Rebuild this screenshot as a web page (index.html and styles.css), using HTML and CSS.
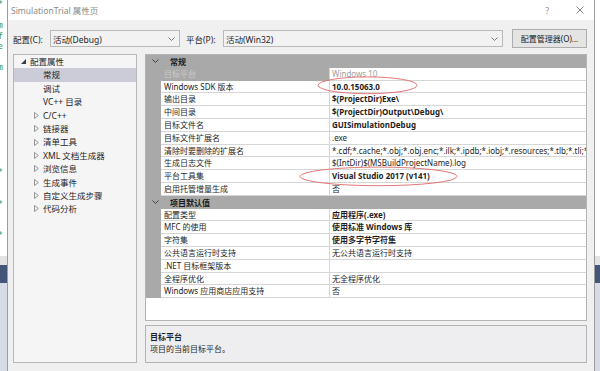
FILE: index.html
```html
<!DOCTYPE html>
<html>
<head>
<meta charset="utf-8" />
<meta name="viewport" content="width=device-width,initial-scale=1.0"/>
<link rel="stylesheet" href="styles.css">
</head>
<body>

<div class="side side-left">
<pre class="code">*

m
f
e

m









*


*


*</pre>
</div>

<div class="dialog">
  <div class="titlebar">
    <span class="title">SimulationTrial 属性页</span>
    <span class="help">?</span>
    <svg class="close" width="8" height="8" viewBox="0 0 8 8"><path d="M0.5 0.5L7.5 7.5M7.5 0.5L0.5 7.5" stroke="#7a7a7a" stroke-width="0.9" fill="none"/></svg>
  </div>

  <div class="toolbar">
    <span class="lbl lbl1">配置(C):</span>
    <div class="combo combo1"><span>活动(Debug)</span><svg width="7" height="4" viewBox="0 0 7 4"><path d="M0.5 0.5L3.5 3.5L6.5 0.5" stroke="#666" stroke-width="0.9" fill="none"/></svg></div>
    <span class="lbl lbl2">平台(P):</span>
    <div class="combo combo2"><span>活动(Win32)</span><svg width="7" height="4" viewBox="0 0 7 4"><path d="M0.5 0.5L3.5 3.5L6.5 0.5" stroke="#666" stroke-width="0.9" fill="none"/></svg></div>
    <div class="btn">配置管理器(O)...</div>
  </div>

  <div class="main">
    <div class="tree">
      <div class="node root"><svg width="5" height="5" viewBox="0 0 5 5"><polygon points="5,0 5,5 0,5" fill="#3a3a3a"/></svg><span>配置属性</span></div>
      <div class="node leaf sel">常规</div>
      <div class="node leaf">调试</div>
      <div class="node leaf">VC++ 目录</div>
      <div class="node sub"><svg width="5" height="7" viewBox="0 0 5 7"><polygon points="0.5,0.5 4.3,3.5 0.5,6.5" fill="none" stroke="#8a8a8a" stroke-width="0.9"/></svg><span>C/C++</span></div>
      <div class="node sub"><svg width="5" height="7" viewBox="0 0 5 7"><polygon points="0.5,0.5 4.3,3.5 0.5,6.5" fill="none" stroke="#8a8a8a" stroke-width="0.9"/></svg><span>链接器</span></div>
      <div class="node sub"><svg width="5" height="7" viewBox="0 0 5 7"><polygon points="0.5,0.5 4.3,3.5 0.5,6.5" fill="none" stroke="#8a8a8a" stroke-width="0.9"/></svg><span>清单工具</span></div>
      <div class="node sub"><svg width="5" height="7" viewBox="0 0 5 7"><polygon points="0.5,0.5 4.3,3.5 0.5,6.5" fill="none" stroke="#8a8a8a" stroke-width="0.9"/></svg><span>XML 文档生成器</span></div>
      <div class="node sub"><svg width="5" height="7" viewBox="0 0 5 7"><polygon points="0.5,0.5 4.3,3.5 0.5,6.5" fill="none" stroke="#8a8a8a" stroke-width="0.9"/></svg><span>浏览信息</span></div>
      <div class="node sub"><svg width="5" height="7" viewBox="0 0 5 7"><polygon points="0.5,0.5 4.3,3.5 0.5,6.5" fill="none" stroke="#8a8a8a" stroke-width="0.9"/></svg><span>生成事件</span></div>
      <div class="node sub"><svg width="5" height="7" viewBox="0 0 5 7"><polygon points="0.5,0.5 4.3,3.5 0.5,6.5" fill="none" stroke="#8a8a8a" stroke-width="0.9"/></svg><span>自定义生成步骤</span></div>
      <div class="node sub"><svg width="5" height="7" viewBox="0 0 5 7"><polygon points="0.5,0.5 4.3,3.5 0.5,6.5" fill="none" stroke="#8a8a8a" stroke-width="0.9"/></svg><span>代码分析</span></div>
    </div>

    <div class="right">
      <div class="grid">
        <div class="cat"><svg width="7" height="4" viewBox="0 0 7 4"><path d="M0.5 0.5L3.5 3.5L6.5 0.5" stroke="#333" stroke-width="0.9" fill="none"/></svg><span>常规</span></div>
        <div class="row picked"><div class="gut"></div><div class="name">目标平台</div><div class="val dim">Windows 10</div></div>
        <div class="row"><div class="gut"></div><div class="name">Windows SDK 版本</div><div class="val b">10.0.15063.0</div></div>
        <div class="row"><div class="gut"></div><div class="name">输出目录</div><div class="val b">$(ProjectDir)Exe\</div></div>
        <div class="row"><div class="gut"></div><div class="name">中间目录</div><div class="val b">$(ProjectDir)Output\Debug\</div></div>
        <div class="row"><div class="gut"></div><div class="name">目标文件名</div><div class="val b">GUISimulationDebug</div></div>
        <div class="row"><div class="gut"></div><div class="name">目标文件扩展名</div><div class="val">.exe</div></div>
        <div class="row"><div class="gut"></div><div class="name">清除时要删除的扩展名</div><div class="val">*.cdf;*.cache;*.obj;*.obj.enc;*.ilk;*.ipdb;*.iobj;*.resources;*.tlb;*.tli;*.t</div></div>
        <div class="row"><div class="gut"></div><div class="name">生成日志文件</div><div class="val">$(IntDir)$(MSBuildProjectName).log</div></div>
        <div class="row"><div class="gut"></div><div class="name">平台工具集</div><div class="val b">Visual Studio 2017 (v141)</div></div>
        <div class="row"><div class="gut"></div><div class="name">启用托管增量生成</div><div class="val">否</div></div>
        <div class="cat"><svg width="7" height="4" viewBox="0 0 7 4"><path d="M0.5 0.5L3.5 3.5L6.5 0.5" stroke="#333" stroke-width="0.9" fill="none"/></svg><span>项目默认值</span></div>
        <div class="row"><div class="gut"></div><div class="name">配置类型</div><div class="val b">应用程序(.exe)</div></div>
        <div class="row"><div class="gut"></div><div class="name">MFC 的使用</div><div class="val b">使用标准 Windows 库</div></div>
        <div class="row"><div class="gut"></div><div class="name">字符集</div><div class="val b">使用多字节字符集</div></div>
        <div class="row"><div class="gut"></div><div class="name">公共语言运行时支持</div><div class="val">无公共语言运行时支持</div></div>
        <div class="row"><div class="gut"></div><div class="name">.NET 目标框架版本</div><div class="val"></div></div>
        <div class="row"><div class="gut"></div><div class="name">全程序优化</div><div class="val">无全程序优化</div></div>
        <div class="row"><div class="gut"></div><div class="name">Windows 应用商店应用支持</div><div class="val">否</div></div>
      </div>
      <div class="desc">
        <div class="desc-title">目标平台</div>
        <div>项目的当前目标平台。</div>
      </div>
    </div>
  </div>
</div>

<div class="side side-right"></div>

<!-- red marks drawn over the screenshot -->
<svg class="marks" width="600" height="371" viewBox="0 0 600 371">
  <ellipse cx="367.5" cy="85.3" rx="49.5" ry="8.4" fill="none" stroke="#e06a6a" stroke-width="0.9"/>
  <ellipse cx="378.5" cy="176.4" rx="78.5" ry="9.3" fill="none" stroke="#e06a6a" stroke-width="0.9"/>
</svg>
</body>
</html>
```

FILE: styles.css
```css
body {
     margin:0;
     height:371px;
     overflow:hidden;
     display:flex;
     position:relative;
     font-family:"Noto Sans","Noto Sans CJK SC",sans-serif;
     color:#1e1e1e;
     background:#ffffff;
}

.side {
     background:linear-gradient(to bottom, #ffffff 0 256px, #e3e3e3 256px 265px, #44557a 265px 283px, #d6dbe6 283px);
}
.side-left {
     width:7px;
     overflow:hidden;
}
.side-right {
     flex:1;
}
.code {
     margin:0 0 0 -2px;
     font:8px/10.5px "DejaVu Sans Mono",monospace;
     color:#2b9a3a;
}

.dialog {
     width:586px;
     border-left:1px solid #9c9c9c;
     border-right:1px solid #9c9c9c;
     background:#f0f0f0;
     display:flex;
     flex-direction:column;
}

.titlebar {
     height:20px;
     background:#ffffff;
     display:flex;
     align-items:center;
     padding:0 10px 0 3px;
     font-size:8.5px;
     color:#8a8a8a;
}
.title {
     flex:1;
}
.help {
     margin-right:27px;
     font-size:8px;
}

.toolbar {
     height:19px;
     margin:9px 7px 0 5px;
     display:flex;
     align-items:center;
     font-size:8.5px;
}
.lbl1 {
     width:37px;
}
.lbl2 {
     width:37px;
     margin-left:6px;
}
.combo {
     box-sizing:border-box;
     height:17px;
     border:1px solid #b9b9b9;
     background:#f2f2f2;
     display:flex;
     align-items:center;
     justify-content:space-between;
     padding:0 4px 0 2px;
}
.combo1 {
     width:130px;
}
.combo2 {
     width:280px;
}
.btn {
     box-sizing:border-box;
     width:75px;
     height:19px;
     margin-left:9px;
     border:1px solid #adadad;
     background:#e4e4e4;
     display:flex;
     align-items:center;
     justify-content:center;
     font-size:8px;
}

.main {
     margin:6px 7px 0 5px;
     height:309px;
     display:flex;
     gap:8px;
}

.tree {
     box-sizing:border-box;
     width:124px;
     border:1px solid #b7b7b7;
     background:#f5f5f6;
     font-size:8.5px;
}
.node {
     height:13.4px;
     line-height:13.4px;
     display:flex;
     align-items:center;
     white-space:nowrap;
}
.root svg {
     margin:0 4px 0 7px;
}
.leaf {
     padding-left:29px;
}
.sub svg {
     margin:0 4px 0 20px;
}
.sel {
     background:#cbccd8;
}

.right {
     flex:1;
     display:flex;
     flex-direction:column;
     gap:4px;
}

.grid {
     box-sizing:border-box;
     height:267px;
     border:1px solid #b4b4b4;
     background:#ffffff;
     font-size:8px;
     overflow:hidden;
}
.cat {
     height:12.8px;
     background:#a9a9a9;
     display:flex;
     align-items:center;
     font-weight:bold;
     color:#1a1a1a;
}
.cat svg {
     margin:0 11px 0 6px;
}
.row {
     height:12.8px;
     display:grid;
     grid-template-columns:15px 169px 1fr;
}
.row > div {
     box-sizing:border-box;
     line-height:11.8px;
     border-bottom:1px solid #d6d6d6;
     white-space:nowrap;
     overflow:hidden;
}
.row > .gut {
     background:#a9a9a9;
     border-bottom-color:#a9a9a9;
}
.name {
     padding-left:3px;
     border-right:1px solid #d6d6d6;
}
.val {
     padding-left:2px;
}
.b {
     font-weight:bold;
}
.dim {
     color:#a0a0a0;
}
.picked .name {
     background:#a9a9a9;
     color:#c9c9c9;
     border-bottom-color:#a9a9a9;
}

.desc {
     box-sizing:border-box;
     height:38px;
     border:1px solid #b4b4b4;
     background:#eeeef1;
     padding:5px 4px 3px;
     font-size:8px;
     line-height:12px;
}
.desc-title {
     font-weight:bold;
}

.marks {
     position:absolute;
     left:0;
     top:0;
     pointer-events:none;
}
```
